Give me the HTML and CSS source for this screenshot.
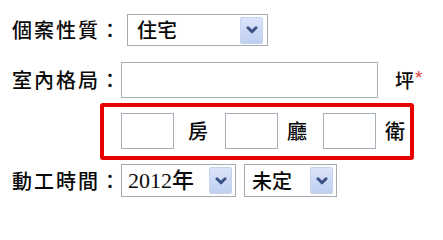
FILE: index.html
```html
<!DOCTYPE html>
<html lang="zh-Hant">
<head>
<meta charset="utf-8">
<title>表單</title>
<link rel="stylesheet" href="styles.css">
</head>
<body>
<form class="form">
  <div class="row row-type">
    <span class="label label-wide">個案性質<span class="colon">：</span></span>
    <div class="select select-type">
      <span class="select-value">住宅</span>
      <span class="select-btn"><svg width="12" height="8" viewBox="0 0 12 8"><path d="M2 1.8 L6 5.8 L10 1.8" fill="none" stroke="#3b5185" stroke-width="3" stroke-linecap="round" stroke-linejoin="round"/></svg></span>
    </div>
  </div>

  <div class="row row-layout">
    <span class="label">室內格局<span class="colon">：</span></span>
    <input class="text-input input-area" type="text">
    <span class="unit-ping">坪</span><span class="required">*</span>
  </div>

  <div class="rooms">
    <input class="text-input input-room" type="text">
    <span class="room-label room-1">房</span>
    <input class="text-input input-room" type="text">
    <span class="room-label room-2">廳</span>
    <input class="text-input input-room" type="text">
    <span class="room-label room-3">衛</span>
  </div>

  <div class="row row-time">
    <span class="label">動工時間<span class="colon">：</span></span>
    <div class="select select-year">
      <span class="select-value select-value-year">2012年</span>
      <span class="select-btn"><svg width="12" height="8" viewBox="0 0 12 8"><path d="M2 1.8 L6 5.8 L10 1.8" fill="none" stroke="#3b5185" stroke-width="3" stroke-linecap="round" stroke-linejoin="round"/></svg></span>
    </div>
    <div class="select select-month">
      <span class="select-value">未定</span>
      <span class="select-btn"><svg width="12" height="8" viewBox="0 0 12 8"><path d="M2 1.8 L6 5.8 L10 1.8" fill="none" stroke="#3b5185" stroke-width="3" stroke-linecap="round" stroke-linejoin="round"/></svg></span>
    </div>
  </div>
</form>
</body>
</html>
```

FILE: styles.css
```css
html, body {
  margin: 0;
  padding: 0;
  background: #ffffff;
}

body {
  font-family: "Noto Sans CJK TC", "Noto Sans", sans-serif;
  font-weight: 500;
  color: #0a0a0a;
}

.form {
  margin: 0;
  padding: 14px 0 0 12px;
}

.row {
  display: flex;
  align-items: center;
}

.label {
  flex-shrink: 0;
  width: 109px;
  font-size: 20px;
  line-height: 24px;
  letter-spacing: 2px;
  white-space: nowrap;
}

.label-wide {
  width: 115px;
}

.colon {
  letter-spacing: 0;
}

.row-type {
  height: 32px;
  margin-bottom: 16px;
}

.row-layout {
  height: 36px;
  margin-bottom: 5px;
}

.row-time {
  height: 33px;
  margin-top: 4px;
  gap: 8px;
}

.row-time .label {
  margin-right: -8px;
}

.select {
  box-sizing: border-box;
  display: flex;
  align-items: center;
  justify-content: space-between;
  height: 100%;
  border: 1px solid #a3abb4;
  background: #ffffff;
  padding: 0 3px 0 7px;
}

.select-type {
  width: 141px;
  padding-left: 9px;
  padding-right: 4px;
}

.select-year {
  width: 115px;
  padding-left: 6px;
}

.select-month {
  width: 93px;
}

.select-value {
  font-size: 20px;
  line-height: 24px;
  white-space: nowrap;
}

.select-value-year {
  font-family: "Liberation Serif", "Noto Sans CJK TC", serif;
  font-size: 22px;
}

.select-btn {
  box-sizing: border-box;
  display: flex;
  align-items: center;
  justify-content: center;
  width: 23px;
  height: 27px;
  border: 1px solid #c6d3ee;
  border-radius: 2px;
  background: linear-gradient(#dbe5fa, #bfcff1);
}

.text-input {
  box-sizing: border-box;
  margin: 0;
  padding: 0;
  border: 1px solid #a7afb8;
  background: #ffffff;
  height: 36px;
  font: inherit;
}

.input-area {
  width: 257px;
}

.unit-ping {
  margin-left: 17px;
  font-size: 19px;
  line-height: 24px;
}

.required {
  align-self: flex-start;
  margin-top: 6px;
  margin-left: 1px;
  color: #e03a3a;
  font-family: "Liberation Sans", sans-serif;
  font-size: 19px;
  line-height: 19px;
}

.rooms {
  box-sizing: border-box;
  display: flex;
  align-items: center;
  width: 314px;
  height: 57px;
  margin-left: 88px;
  padding: 0 0 2px 17px;
  border: 4px solid #e60000;
  border-radius: 3px;
}

.input-room {
  width: 53px;
}

.room-label {
  font-size: 20px;
  line-height: 24px;
}

.room-1 {
  margin: 0 17px 0 14px;
}

.room-2 {
  margin: 0 16px 0 9px;
}

.room-3 {
  margin: 0 0 0 9px;
}
```
